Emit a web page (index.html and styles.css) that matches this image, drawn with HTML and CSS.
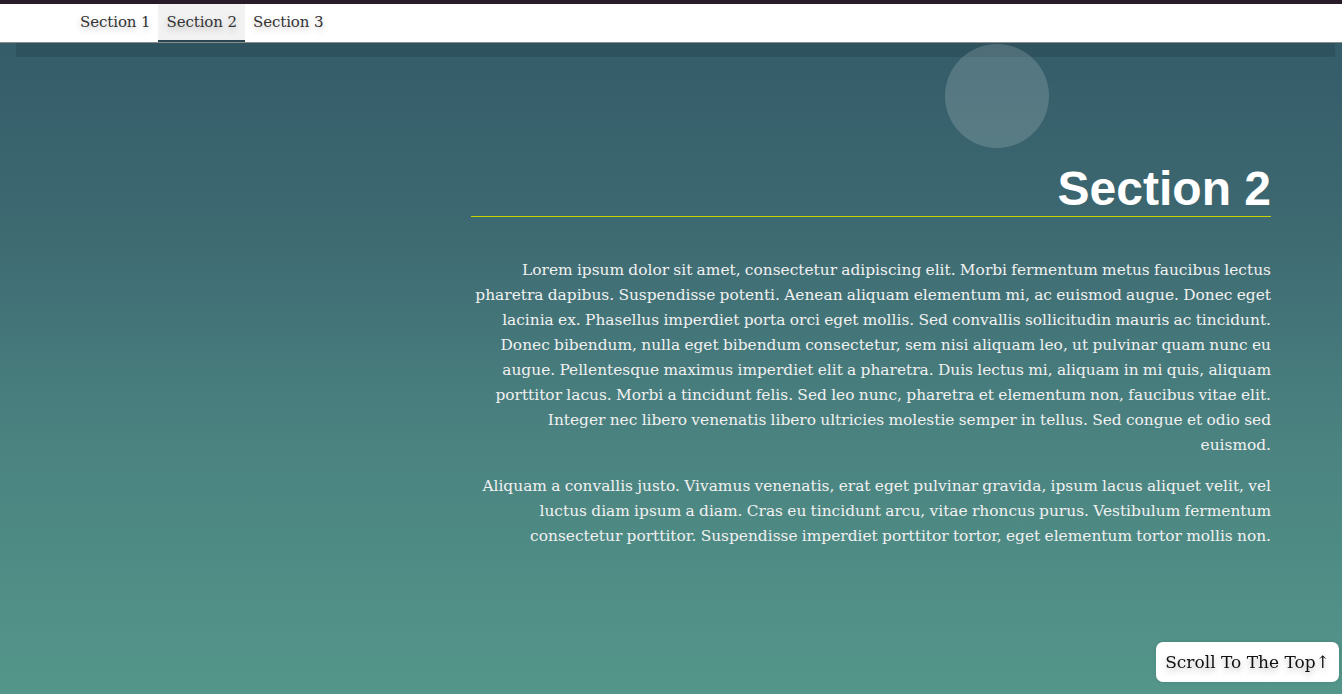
FILE: index.html
```html
<!DOCTYPE html>
<html lang="en">
<head>
<meta charset="utf-8">
<title>Sections</title>
<link rel="stylesheet" href="styles.css">
</head>
<body>
<div class="topbar"></div>
<nav class="nav">
  <ul class="nav-list">
    <li><a class="nav-link" href="#s1">Section 1</a></li>
    <li><a class="nav-link active" href="#s2">Section 2</a></li>
    <li><a class="nav-link" href="#s3">Section 3</a></li>
  </ul>
</nav>
<main class="main">
  <div class="band"></div>
  <div class="circle"></div>
  <section class="section" id="s2">
    <article class="article">
      <h2 class="title">Section 2</h2>
      <p class="text">Lorem ipsum dolor sit amet, consectetur adipiscing elit. Morbi fermentum metus faucibus lectus pharetra dapibus. Suspendisse potenti. Aenean aliquam elementum mi, ac euismod augue. Donec eget lacinia ex. Phasellus imperdiet porta orci eget mollis. Sed convallis sollicitudin mauris ac tincidunt. Donec bibendum, nulla eget bibendum consectetur, sem nisi aliquam leo, ut pulvinar quam nunc eu augue. Pellentesque maximus imperdiet elit a pharetra. Duis lectus mi, aliquam in mi quis, aliquam porttitor lacus. Morbi a tincidunt felis. Sed leo nunc, pharetra et elementum non, faucibus vitae elit. Integer nec libero venenatis libero ultricies molestie semper in tellus. Sed congue et odio sed euismod.</p>
      <p class="text">Aliquam a convallis justo. Vivamus venenatis, erat eget pulvinar gravida, ipsum lacus aliquet velit, vel luctus diam ipsum a diam. Cras eu tincidunt arcu, vitae rhoncus purus. Vestibulum fermentum consectetur porttitor. Suspendisse imperdiet porttitor tortor, eget elementum tortor mollis non.</p>
    </article>
  </section>
</main>
<a class="scroll-top" href="#">Scroll To The Top&#8593;</a>
</body>
</html>
```
FILE: styles.css
```css
* { box-sizing: border-box; }
html, body { margin: 0; padding: 0; height: 100%; }
body {
  font-family: "DejaVu Serif", "Liberation Serif", serif;
  overflow: hidden;
  display: flex;
  flex-direction: column;
}
.topbar { height: 4px; background: #2a1b29; flex: none; }
.nav {
  flex: none;
  height: 39px;
  background: #fff;
  border-bottom: 1px solid #8c8c8c;
}
.nav-list {
  list-style: none;
  margin: 0;
  padding: 0 0 0 72px;
  display: flex;
  height: 38px;
}
.nav-list li { display: flex; }
.nav-link {
  display: flex;
  align-items: center;
  padding: 0 8px;
  font-size: 15px;
  letter-spacing: -0.1px;
  color: #333;
  text-decoration: none;
  text-shadow: 0 3px 6px rgba(0,0,0,0.25);
  border-bottom: 2px solid transparent;
}
.nav-link.active {
  background: #f2f2f2;
  border-bottom-color: #2b4653;
}
.main {
  flex: 1;
  position: relative;
  background: linear-gradient(180deg, #345c69 0%, #3c6770 25%, #4a8280 60%, #54968a 100%);
}
.band {
  height: 14px;
  margin: 0 7px 0 16px;
  background: rgba(0,0,0,0.1);
}
.circle {
  position: absolute;
  left: 945px;
  top: 1px;
  width: 104px;
  height: 104px;
  border-radius: 50%;
  background: rgba(255,255,255,0.16);
}
.section {
  display: flex;
  justify-content: flex-end;
  padding: 104px 71px 0 0;
}
.article { width: 800px; text-align: right; color: #f1f1f1; }
.title {
  margin: 0 0 41px;
  font-family: "Liberation Sans", Arial, sans-serif;
  font-weight: 700;
  font-size: 48px;
  color: #fff;
  border-bottom: 1px solid #c6d400;
}
.text {
  margin: 16px 0 16px 3px;
  font-size: 15.4px;
  word-spacing: -0.6px;
  line-height: 25px;
}
.scroll-top {
  position: fixed;
  right: 3px;
  bottom: 12px;
  width: 183px;
  height: 40px;
  display: flex;
  align-items: center;
  justify-content: center;
  background: #fff;
  border-radius: 7px;
  color: #111;
  font-size: 17px;
  text-decoration: none;
  text-shadow: 0 3px 6px rgba(0,0,0,0.3);
  box-shadow: 0 0 4px rgba(0,0,0,0.1);
}
```
